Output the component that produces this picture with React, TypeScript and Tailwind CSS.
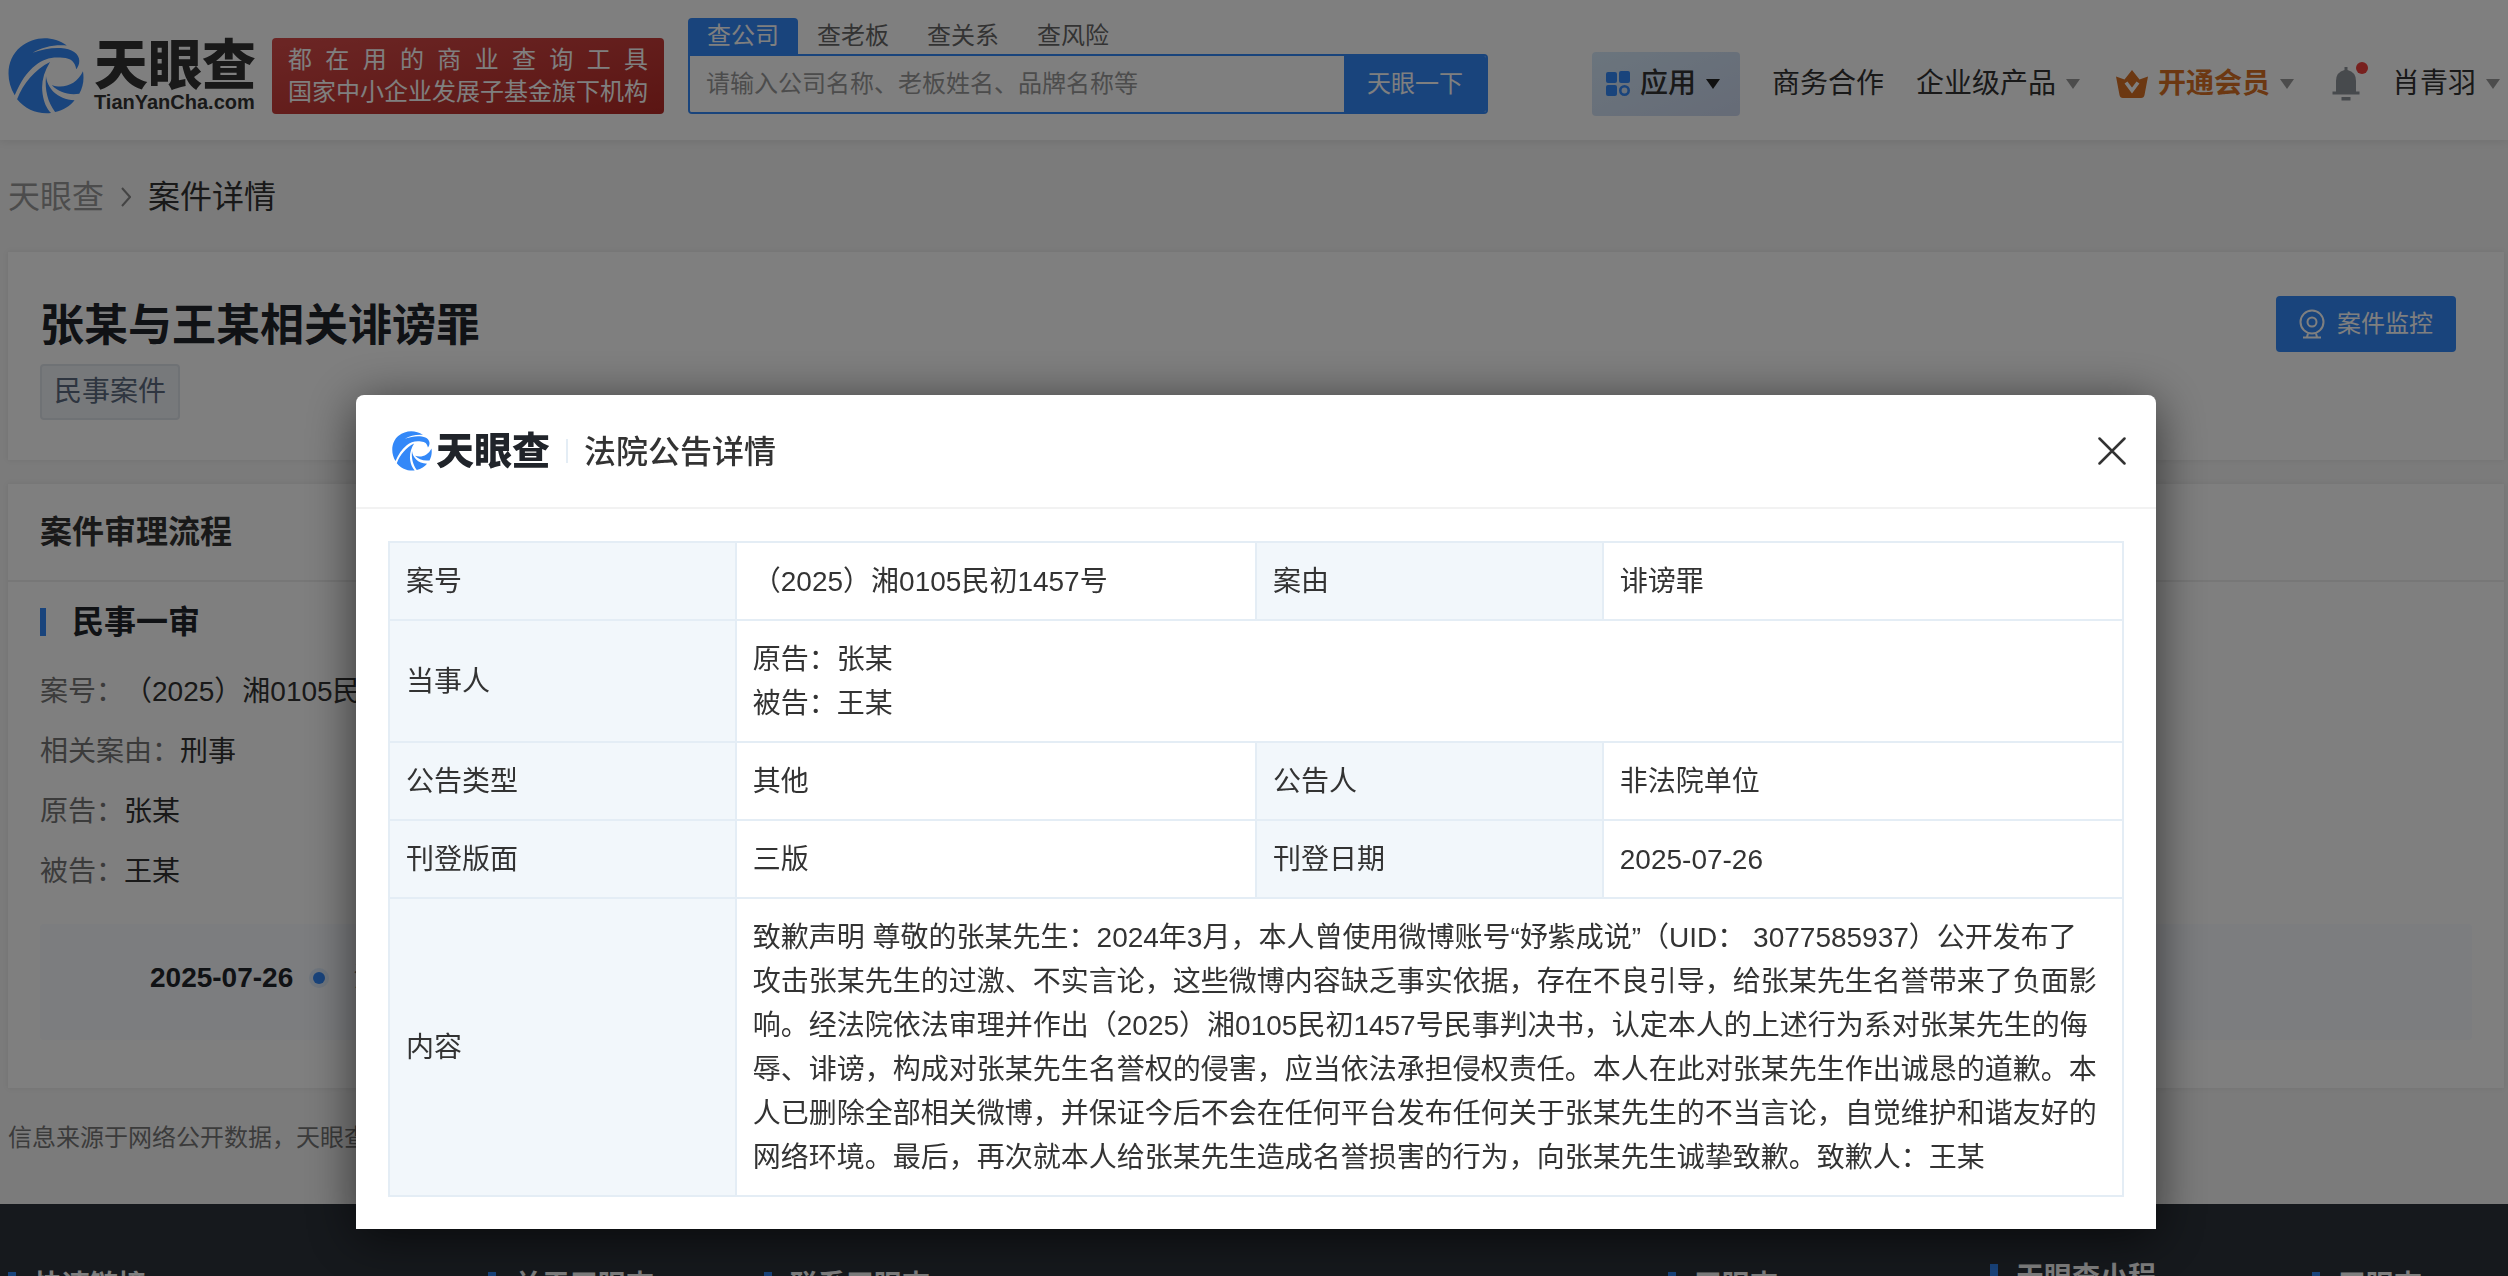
import { useState, type ReactNode } from "react";

interface PartyRow {
  label: string;
  value: string;
}

const searchTabs = ["查公司", "查老板", "查关系", "查风险"];

const caseRows: PartyRow[] = [
  { label: "案号：", value: "（2025）湘0105民初1457号" },
  { label: "相关案由：", value: "刑事" },
  { label: "原告：", value: "张某" },
  { label: "被告：", value: "王某" },
];

const noticeContent =
  "致歉声明 尊敬的张某先生：2024年3月，本人曾使用微博账号“妤紫成说”（UID： 3077585937）公开发布了攻击张某先生的过激、不实言论，这些微博内容缺乏事实依据，存在不良引导，给张某先生名誉带来了负面影响。经法院依法审理并作出（2025）湘0105民初1457号民事判决书，认定本人的上述行为系对张某先生的侮辱、诽谤，构成对张某先生名誉权的侵害，应当依法承担侵权责任。本人在此对张某先生作出诚恳的道歉。本人已删除全部相关微博，并保证今后不会在任何平台发布任何关于张某先生的不当言论，自觉维护和谐友好的网络环境。最后，再次就本人给张某先生造成名誉损害的行为，向张某先生诚挚致歉。致歉人：王某";

function LogoMark({ className }: { className: string }) {
  return (
    <svg viewBox="25 25 226 226" className={className} fill="#3388f8" aria-hidden="true">
      <path d="M45 195C15 145 22 85 62 52C103 18 158 18 200 47C162 44 128 51 98 69C128 59 156 53 182 55C215 57 237 72 237 93C237 103 234 111 228 118C224 96 212 85 188 84C155 80 130 88 108 105C80 127 62 155 45 195Z" />
      <path d="M52 207C70 160 105 118 150 96C130 128 123 160 128 192C132 217 139 233 153 248C112 252 78 238 52 207Z" />
      <path d="M138 138C141 172 170 208 223 210C210 227 190 239 165 245C143 215 134 180 138 138Z" />
      <path d="M155 165C190 178 230 163 248 124C252 149 248 172 237 191C202 195 176 187 155 165Z" />
    </svg>
  );
}

function Caret({ className }: { className: string }) {
  return (
    <svg viewBox="0 0 14 10" className={`h-[10px] w-[14px] ${className}`} fill="currentColor" aria-hidden="true">
      <path d="M0 0h14L7 10z" />
    </svg>
  );
}

function HeaderCell({ children }: { children: ReactNode }) {
  return (
    <th scope="row" className="border-2 border-[#e4edf5] bg-[#f2f7fb] px-4 pt-[17px] pb-[15px] text-left font-normal">
      {children}
    </th>
  );
}

function Cell({ children, span }: { children: ReactNode; span?: number }) {
  return (
    <td colSpan={span} className="border-2 border-[#e4edf5] pt-[17px] pr-5 pb-[15px] pl-4">
      {children}
    </td>
  );
}

function SearchBox() {
  const [active, setActive] = useState(0);
  const [keyword, setKeyword] = useState("");

  return (
    <div className="mt-[18px] ml-6 w-[800px] self-start text-[24px]">
      <div className="flex h-9 leading-9">
        {searchTabs.map((tab, index) => (
          <button
            key={tab}
            onClick={() => setActive(index)}
            className={
              index === active
                ? "w-[110px] rounded-t bg-[#3388f8] text-white"
                : "w-[110px] text-[#666]"
            }
          >
            {tab}
          </button>
        ))}
      </div>
      <div className="flex h-[60px] overflow-hidden rounded rounded-tl-none border-2 border-[#3388f8]">
        <input
          aria-label="搜索"
          value={keyword}
          onChange={(e) => setKeyword(e.target.value)}
          placeholder="请输入公司名称、老板姓名、品牌名称等"
          className="min-w-0 flex-1 bg-white px-4 outline-none placeholder:text-[#999]"
        />
        <button className="w-[142px] bg-[#3388f8] text-white">天眼一下</button>
      </div>
    </div>
  );
}

function TopNav() {
  return (
    <nav className="mr-2 ml-auto flex items-center self-start pt-[52px] text-[28px] leading-[64px] whitespace-nowrap text-[#333]">
      <button className="flex h-16 w-[148px] items-center rounded bg-linear-to-br from-[#d6eafb] to-[#ccd7ee] pl-[14px]">
        <svg viewBox="0 0 24 26" className="mr-[10px] h-[26px] w-6" fill="#3388f8" aria-hidden="true">
          <rect x="0" y="1" width="11" height="11" rx="2" />
          <rect x="13" y="0" width="11" height="12" rx="2" />
          <rect x="0" y="14" width="11" height="11" rx="2" />
          <circle cx="18.5" cy="19.5" r="4.2" fill="none" stroke="#3388f8" strokeWidth="2.6" />
        </svg>
        <span className="font-medium">应用</span>
        <Caret className="ml-[10px] text-[#222]" />
      </button>
      <a href="#cooperation" className="ml-8">商务合作</a>
      <a href="#enterprise" className="ml-8 flex items-center">
        企业级产品
        <Caret className="ml-[10px] text-[#999]" />
      </a>
      <a href="#vip" className="ml-9 flex items-center font-bold text-[#d87024]">
        <svg viewBox="0 0 32 28" className="mr-[10px] h-7 w-8" aria-hidden="true">
          <path
            d="M0 6.5L8.5 9.5L16 0L23.500 9.5L32 6.500L28.500 25Q28 28 25 28H7Q4 28 3.500 25Z"
            fill="currentColor"
          />
          <path d="M10 12.500L16 20.500L22 12.500" fill="none" stroke="#fff" strokeWidth="3.600" />
        </svg>
        开通会员
        <Caret className="ml-[10px] text-[#999]" />
      </a>
      <button aria-label="消息" className="relative ml-[38px] h-9 w-7">
        <svg viewBox="0 0 28 34" className="h-[34px] w-7" fill="#8f949b" aria-hidden="true">
          <path d="M12.500 0h3v3Q24 5 24 14V24.500H27.500V27.500H.5V24.500H4V14Q4 5 12.500 3Z" />
          <rect x="9.500" y="30" width="9" height="3.500" />
        </svg>
        <span className="absolute -top-1 -right-2 size-3 rounded-full bg-[#f0403c]" />
      </button>
      <a href="#user" className="ml-8 flex items-center">
        肖青羽
        <Caret className="ml-[10px] text-[#999]" />
      </a>
    </nav>
  );
}

function Header() {
  return (
    <header className="flex h-[140px] items-center bg-white pl-2 shadow-[0_2px_8px_rgba(0,0,0,0.08)]">
      <a href="#home" className="mt-3 flex shrink-0 items-center">
        <LogoMark className="size-[76px]" />
        <span className="ml-[10px] flex w-[162px] flex-col text-[#333]">
          <span className="text-[54px] leading-[52px] font-black">天眼查</span>
          <span className="text-[20px] leading-5 font-bold">TianYanCha.com</span>
        </span>
      </a>
      <div className="mt-3 ml-4 flex h-[76px] w-[392px] shrink-0 flex-col justify-center rounded bg-linear-to-br from-[#d84c4a] to-[#b62a26] px-4 text-[24px] leading-8 text-white">
        <p className="[text-align-last:justify]">都在用的商业查询工具</p>
        <p>国家中小企业发展子基金旗下机构</p>
      </div>
      <SearchBox />
      <TopNav />
    </header>
  );
}

function CaseSummary() {
  return (
    <section className="flex h-52 items-start justify-between bg-white pt-11 pr-12 pl-8 shadow-[0_0_6px_rgba(0,0,0,0.08)]">
      <div>
        <h1 className="text-[44px] leading-[60px] font-bold text-[#20242a]">张某与王某相关诽谤罪</h1>
        <span className="mt-2 inline-block h-14 rounded border-2 border-[#dfe4ea] bg-[#eff3f7] px-3 text-[28px] leading-[52px] text-[#5c6b80]">
          民事案件
        </span>
      </div>
      <button className="flex h-14 w-[180px] items-center justify-center gap-3 rounded bg-[#3388f8] text-[24px] text-white">
        <svg viewBox="0 0 26 30" className="h-[30px] w-[26px]" fill="none" stroke="currentColor" strokeWidth="2" aria-hidden="true">
          <circle cx="13" cy="13" r="11.500" />
          <circle cx="13" cy="13" r="4.500" />
          <path d="M9 24.500L8 28M17 24.500L18 28M4 28.500H22" />
        </svg>
        案件监控
      </button>
    </section>
  );
}

function CaseProcess() {
  return (
    <section className="mt-6 bg-white pb-12 shadow-[0_0_6px_rgba(0,0,0,0.08)]">
      <h2 className="border-b-2 border-[#eee] px-8 text-[32px] leading-[96px] font-bold text-[#333]">案件审理流程</h2>
      <div className="px-8 pt-5">
        <h3 className="flex items-center text-[32px] leading-10 font-bold text-[#20242a]">
          <span className="mr-[26px] h-7 w-[6px] bg-[#3388f8]" />
          民事一审
        </h3>
        <dl className="mt-5 text-[28px] leading-[60px]">
          {caseRows.map((row) => (
            <div key={row.label} className="flex">
              <dt className="text-[#777]">{row.label}</dt>
              <dd className="text-[#333]">{row.value}</dd>
            </div>
          ))}
        </dl>
        <div className="mt-[22px] flex h-[116px] items-center rounded bg-[#f8fafe] pb-2 pl-[110px] text-[28px]">
          <time className="font-bold text-[#20242a]">2025-07-26</time>
          <span className="mx-4 flex size-5 items-center justify-center rounded-full bg-[#e0edfc]">
            <span className="size-3 rounded-full bg-[#3388f8]" />
          </span>
          <span className="ml-2 text-[#777]">法院公告</span>
        </div>
      </div>
    </section>
  );
}

function FooterTitle({ children }: { children: ReactNode }) {
  return (
    <h4 className="flex items-start text-[28px] leading-7 font-bold text-white">
      <span className="mr-[18px] h-7 w-2 shrink-0 bg-[#3388f8]" />
      <span>{children}</span>
    </h4>
  );
}

function Footer() {
  return (
    <footer className="grid h-[420px] grid-cols-[480px_276px_904px_322px_322px_1fr] bg-[#2c323a] pt-[60px] pl-2">
      <div className="pt-2"><FooterTitle>快速链接</FooterTitle></div>
      <div className="pt-2"><FooterTitle>关于天眼查</FooterTitle></div>
      <div className="pt-2"><FooterTitle>联系天眼查</FooterTitle></div>
      <div className="pt-2"><FooterTitle>天眼查</FooterTitle></div>
      <div className="w-[170px]"><FooterTitle>天眼查小程序</FooterTitle></div>
      <div className="pt-2"><FooterTitle>天眼查</FooterTitle></div>
    </footer>
  );
}

function NoticeDialog({ onClose }: { onClose: () => void }) {
  return (
    <div className="fixed inset-0 flex items-start justify-center bg-black/50 pt-[395px] pl-1">
      <div
        role="dialog"
        aria-modal="true"
        aria-labelledby="notice-title"
        className="w-[1800px] max-w-full rounded-t-lg bg-white shadow-[0_8px_50px_rgba(0,0,0,0.6)]"
      >
        <div className="flex h-[114px] items-center border-b-2 border-[#f2f2f2] px-[30px] pl-9">
          <LogoMark className="size-10" />
          <span className="ml-1 text-[38px] leading-10 font-black text-[#20242a]">天眼查</span>
          <span className="mx-4 h-6 w-[2px] bg-[#e4edf5]" />
          <h2 id="notice-title" className="pt-0.5 text-[32px] leading-10 font-medium text-[#333]">法院公告详情</h2>
          <button aria-label="关闭" onClick={onClose} className="ml-auto">
            <svg viewBox="0 0 28 28" className="size-7" fill="none" stroke="#333" strokeWidth="2.500" strokeLinecap="round">
              <path d="M1.500 1.500L26.500 26.500M26.500 1.500L1.500 26.500" />
            </svg>
          </button>
        </div>
        <div className="p-8">
          <table className="w-full table-fixed border-collapse text-[28px] leading-[44px] text-[#333]">
            <colgroup>
              <col className="w-[20%]" />
              <col className="w-[30%]" />
              <col className="w-[20%]" />
              <col className="w-[30%]" />
            </colgroup>
            <tbody>
              <tr>
                <HeaderCell>案号</HeaderCell>
                <Cell>（2025）湘0105民初1457号</Cell>
                <HeaderCell>案由</HeaderCell>
                <Cell>诽谤罪</Cell>
              </tr>
              <tr>
                <HeaderCell>当事人</HeaderCell>
                <Cell span={3}>
                  <p>原告：张某</p>
                  <p>被告：王某</p>
                </Cell>
              </tr>
              <tr>
                <HeaderCell>公告类型</HeaderCell>
                <Cell>其他</Cell>
                <HeaderCell>公告人</HeaderCell>
                <Cell>非法院单位</Cell>
              </tr>
              <tr>
                <HeaderCell>刊登版面</HeaderCell>
                <Cell>三版</Cell>
                <HeaderCell>刊登日期</HeaderCell>
                <Cell>2025-07-26</Cell>
              </tr>
              <tr>
                <HeaderCell>内容</HeaderCell>
                <Cell span={3}>{noticeContent}</Cell>
              </tr>
            </tbody>
          </table>
        </div>
      </div>
    </div>
  );
}

export default function App() {
  const [open, setOpen] = useState(true);

  return (
    <div
      lang="zh-CN"
      className="h-screen overflow-hidden bg-[#f6f6f6] font-['Liberation_Sans','Noto_Sans_CJK_SC',sans-serif] [text-spacing-trim:space-all]"
    >
      <Header />
      <main className="pr-1 pl-2">
        <nav aria-label="面包屑" className="flex h-28 items-center pt-0.5 text-[32px]">
          <a href="#home" className="text-[#999]">天眼查</a>
          <svg viewBox="0 0 10 20" className="mx-[17px] h-5 w-[10px]" fill="none" stroke="#888" strokeWidth="2" aria-hidden="true">
            <path d="M1 1L9 10L1 19" />
          </svg>
          <span className="text-[#333]">案件详情</span>
        </nav>
        <CaseSummary />
        <CaseProcess />
        <p className="pt-8 pb-12 text-[24px] leading-9 text-[#777]">
          信息来源于网络公开数据，天眼查仅提供信息展示
        </p>
      </main>
      <Footer />
      {open && <NoticeDialog onClose={() => setOpen(false)} />}
    </div>
  );
}
